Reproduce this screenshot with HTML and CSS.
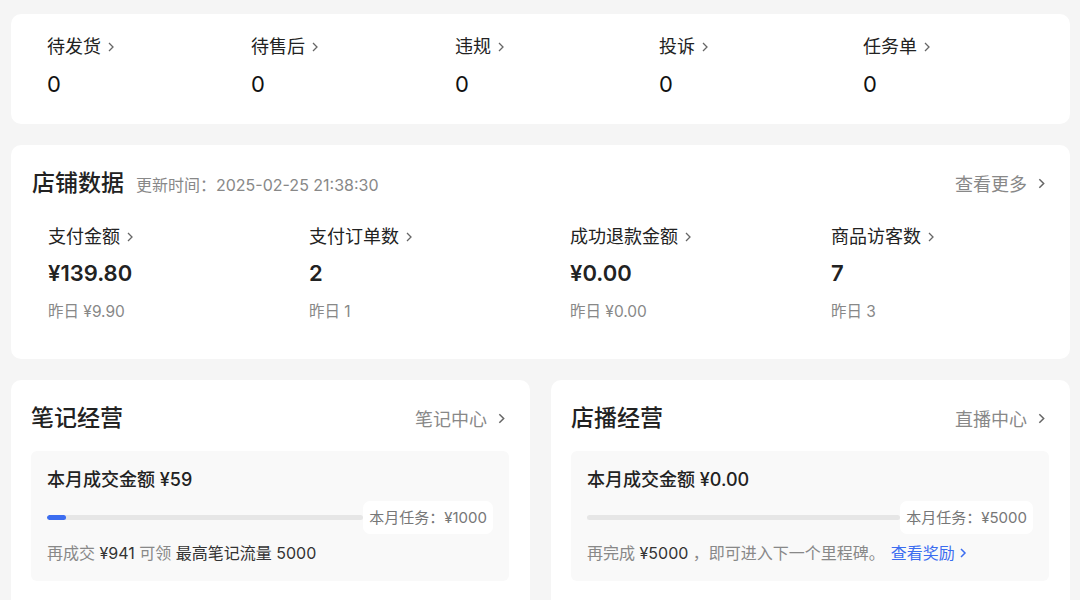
FILE: index.html
```html
<!DOCTYPE html>
<html lang="zh">
<head>
<meta charset="utf-8">
<link rel="stylesheet" href="styles.css">
</head>
<body>
<div class="page">
  <section class="card todo">
    <div class="todo-item"><div class="lbl">待发货<svg class="chev" viewBox="0 0 8 12"><polyline points="2,2 6,6 2,10"/></svg></div><div class="num">0</div></div>
    <div class="todo-item"><div class="lbl">待售后<svg class="chev" viewBox="0 0 8 12"><polyline points="2,2 6,6 2,10"/></svg></div><div class="num">0</div></div>
    <div class="todo-item"><div class="lbl">违规<svg class="chev" viewBox="0 0 8 12"><polyline points="2,2 6,6 2,10"/></svg></div><div class="num">0</div></div>
    <div class="todo-item"><div class="lbl">投诉<svg class="chev" viewBox="0 0 8 12"><polyline points="2,2 6,6 2,10"/></svg></div><div class="num">0</div></div>
    <div class="todo-item"><div class="lbl">任务单<svg class="chev" viewBox="0 0 8 12"><polyline points="2,2 6,6 2,10"/></svg></div><div class="num">0</div></div>
  </section>

  <section class="card shop">
    <div class="head">
      <div class="head-l"><h2 class="title">店铺数据</h2><span class="sub">更新时间：2025-02-25 21:38:30</span></div>
      <div class="more">查看更多<svg class="chev2" viewBox="0 0 8 12"><polyline points="2,2 6,6 2,10"/></svg></div>
    </div>
    <div class="metrics">
      <div class="metric"><div class="lbl">支付金额<svg class="chev" viewBox="0 0 8 12"><polyline points="2,2 6,6 2,10"/></svg></div><div class="val">¥139.80</div><div class="yest">昨日 ¥9.90</div></div>
      <div class="metric"><div class="lbl">支付订单数<svg class="chev" viewBox="0 0 8 12"><polyline points="2,2 6,6 2,10"/></svg></div><div class="val">2</div><div class="yest">昨日 1</div></div>
      <div class="metric"><div class="lbl">成功退款金额<svg class="chev" viewBox="0 0 8 12"><polyline points="2,2 6,6 2,10"/></svg></div><div class="val">¥0.00</div><div class="yest">昨日 ¥0.00</div></div>
      <div class="metric"><div class="lbl">商品访客数<svg class="chev" viewBox="0 0 8 12"><polyline points="2,2 6,6 2,10"/></svg></div><div class="val">7</div><div class="yest">昨日 3</div></div>
    </div>
  </section>

  <div class="row">
    <section class="card biz">
      <div class="head">
        <h2 class="title">笔记经营</h2>
        <div class="more">笔记中心<svg class="chev2" viewBox="0 0 8 12"><polyline points="2,2 6,6 2,10"/></svg></div>
      </div>
      <div class="box">
        <div class="amt">本月成交金额 ¥59</div>
        <div class="prog">
          <div class="bar"><div class="fill" style="width:6%"></div></div>
          <div class="badge">本月任务：¥1000</div>
        </div>
        <div class="note"><span class="g">再成交</span> ¥941 <span class="g">可领</span> 最高笔记流量 5000</div>
      </div>
    </section>
    <section class="card biz">
      <div class="head">
        <h2 class="title">店播经营</h2>
        <div class="more">直播中心<svg class="chev2" viewBox="0 0 8 12"><polyline points="2,2 6,6 2,10"/></svg></div>
      </div>
      <div class="box">
        <div class="amt">本月成交金额 ¥0.00</div>
        <div class="prog">
          <div class="bar"><div class="fill" style="width:0%"></div></div>
          <div class="badge">本月任务：¥5000</div>
        </div>
        <div class="note"><span class="g">再完成</span> ¥5000 <span class="g">，即可进入下一个里程碑。</span><span class="link">查看奖励<svg class="chev3" viewBox="0 0 8 12"><polyline points="2,2 6,6 2,10"/></svg></span></div>
      </div>
    </section>
  </div>
</div>
</body>
</html>
```

FILE: styles.css
```css
* { box-sizing: border-box; margin: 0; padding: 0; }
html, body { background: #f5f5f5; }
body {
  font-family: "Inter", "Noto Sans CJK SC", sans-serif;
  color: #222;
  overflow: hidden;
}
.page {
  padding: 14px 10px 0 11px;
  display: flex;
  flex-direction: column;
  gap: 21px;
}
.card {
  background: #fff;
  border-radius: 10px;
}
.chev {
  width: 8px; height: 12px;
  margin-left: 6px;
  fill: none;
  stroke: #666;
  stroke-width: 1.3;
}
.chev2 {
  width: 9px; height: 13px;
  margin-left: 10px;
  fill: none;
  stroke: #666;
  stroke-width: 1.4;
}
.chev3 {
  width: 8px; height: 12px;
  margin-left: 4px;
  fill: none;
  stroke: #3c6df0;
  stroke-width: 1.5;
}

/* todo card */
.todo {
  height: 110px;
  padding: 20px 36px 0;
  display: grid;
  grid-template-columns: repeat(5, 204px);
}
.lbl {
  font-size: 18px;
  line-height: 26px;
  color: #222;
  display: flex;
  align-items: center;
}
.num {
  margin-top: 10px;
  font-size: 22px;
  line-height: 28px;
  color: #111;
}

/* shop card */
.shop {
  height: 214px;
  padding: 23px 24px 0 21px;
}
.head {
  display: flex;
  justify-content: space-between;
  align-items: center;
  height: 30px;
}
.head-l { display: flex; align-items: center; }
.title {
  font-size: 23px;
  line-height: 30px;
  font-weight: 500;
  color: #222;
}
.sub {
  margin-left: 12px;
  font-size: 16px;
  color: #888;
  padding-top: 1px;
}
.more {
  font-size: 18px;
  color: #888;
  display: flex;
  align-items: center;
}
.metrics {
  margin-top: 26px;
  padding-left: 16px;
  display: grid;
  grid-template-columns: repeat(4, 261px);
}
.val {
  margin-top: 8px;
  font-size: 22px;
  line-height: 30px;
  font-weight: 600;
  color: #222;
}
.yest {
  margin-top: 13px;
  font-size: 15.5px;
  line-height: 22px;
  color: #888;
}

/* bottom row */
.row {
  display: grid;
  grid-template-columns: 1fr 1fr;
  gap: 21px;
}
.biz {
  height: 240px;
  padding: 23px 21px 0 20px;
}
.biz .more { padding-right: 3px; }
.box {
  margin-top: 18px;
  background: #f9f9f9;
  border-radius: 6px;
  padding: 17px 16px 17px 16px;
}
.amt {
  font-size: 18px;
  line-height: 24px;
  font-weight: 500;
  color: #222;
}
.prog {
  margin-top: 9px;
  display: flex;
  align-items: center;
}
.bar {
  flex: 1;
  height: 5px;
  border-radius: 3px;
  background: #e6e6e6;
  overflow: hidden;
}
.fill {
  height: 100%;
  background: #3c6df0;
  border-radius: 3px;
}
.badge {
  height: 33px;
  padding: 0 6px;
  background: #fff;
  border-radius: 7px;
  font-size: 15px;
  line-height: 33px;
  color: #777;
}
.note {
  margin-top: 8px;
  font-size: 16px;
  line-height: 22px;
  color: #333;
}
.note .g { color: #888; }
.link {
  color: #3c6df0;
  margin-left: 6px;
  display: inline-flex;
  align-items: center;
}
```
